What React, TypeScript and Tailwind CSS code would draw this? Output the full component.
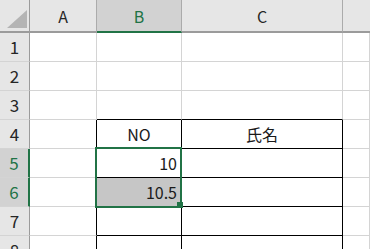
import React from "react";

const font = { fontFamily: '"Noto Sans CJK JP", "Noto Sans", sans-serif' };

export default function App() {
  const hdr =
    "flex items-center justify-center bg-[#e6e6e6] border-r border-r-[#ababab] border-b-2 border-b-[#9b9b9b] text-[16px] text-[#262626]";
  const rowHdr =
    "flex items-center justify-center bg-[#e6e6e6] border-r border-r-[#9b9b9b] border-b border-b-[#d4d4d4] text-[17px] text-[#262626]";
  const rowHdrSel =
    "flex items-center justify-center bg-[#d2d2d2] border-r-2 border-r-[#217346] border-b border-b-[#d4d4d4] text-[17px] text-[#217346]";
  const g = "border-r border-b border-[#d4d4d4]";
  const aT = "border-r border-r-black border-b border-b-[#d4d4d4]";
  const t = "border-r border-b border-black";

  const rows: string[][] = [
    [g, g, g, g],
    [g, g, g, g],
    [g, "border-r border-r-[#d4d4d4] border-b border-b-black", "border-r border-r-[#d4d4d4] border-b border-b-black", g],
    [aT, t, t, g],
    [aT, t, t, g],
    [aT, t, t, g],
    [aT, t, t, g],
    [aT, t, t, g],
  ];

  return (
    <div className="w-[370px] h-[249px] overflow-hidden bg-white" style={font}>
      <div className="relative grid grid-cols-[30px_67px_85px_161px_1fr] grid-rows-[33px_repeat(8,29px)]">
        <div className="flex items-end justify-end pr-[2px] pb-[3px] bg-[#e6e6e6] border-r border-r-[#9b9b9b] border-b-2 border-b-[#9b9b9b]">
          <svg width="20" height="18" viewBox="0 0 20 18">
            <polygon points="20,0 20,18 0,18" fill="#b4b4b4" />
          </svg>
        </div>
        <div className={hdr}>A</div>
        <div className="flex items-center justify-center bg-[#d2d2d2] border-r border-r-[#ababab] border-b-2 border-b-[#217346] text-[16px] text-[#217346]">
          B
        </div>
        <div className={hdr}>C</div>
        <div className="bg-[#e6e6e6] border-b-2 border-b-[#9b9b9b]" />

        {rows.map((r, i) => {
          const n = i + 1;
          const sel = n === 5 || n === 6;
          return (
            <React.Fragment key={n}>
              <div className={sel ? rowHdrSel : rowHdr}>{n}</div>
              <div className={r[0]} />
              <div
                className={
                  r[1] +
                  " flex items-center text-[16px] text-[#1a1a1a] " +
                  (n === 4 ? "justify-center" : "justify-end pr-[4px]") +
                  (n === 6 ? " bg-[#c6c6c6]" : "")
                }
              >
                {n === 4 ? "NO" : n === 5 ? "10" : n === 6 ? "10.5" : ""}
              </div>
              <div className={r[2] + " flex items-center justify-center text-[16px] text-[#1a1a1a]"}>
                {n === 4 ? "氏名" : ""}
              </div>
              <div className={r[3]} />
            </React.Fragment>
          );
        })}

        <div className="absolute left-[95px] top-[147px] w-[87px] h-[61px] border-2 border-[#217346] pointer-events-none" />
        <div className="absolute left-[177px] top-[202px] w-[6px] h-[6px] bg-[#217346]" />
      </div>
    </div>
  );
}
